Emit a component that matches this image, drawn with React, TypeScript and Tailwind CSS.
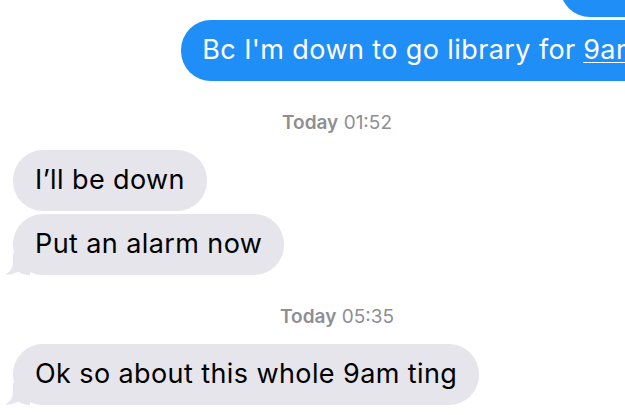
function Tail() {
  return (
    <svg
      className="absolute left-[-9px] bottom-0"
      width="26"
      height="22"
      viewBox="0 0 26 22"
    >
      <path
        d="M9 0 L9 9 C9 15 6 19 1 21.5 C6 22 10.5 20.8 14 18.5 C17.5 20.8 21 22 26 22 L26 0 Z"
        fill="#e6e5eb"
      />
    </svg>
  );
}

function Received({ text, tail }: { text: string; tail?: boolean }) {
  return (
    <div className="flex pl-[13px]">
      <div className="relative flex items-center h-[61px] px-[22px] rounded-[30px] bg-[#e6e5eb] text-black text-[27px] tracking-[0.015em] whitespace-nowrap">
        {tail && <Tail />}
        <span className="relative">{text}</span>
      </div>
    </div>
  );
}

function Stamp({ time }: { time: string }) {
  return (
    <div className="h-[69px] pt-[30px] text-center text-[19px] leading-[23px] text-[#8e8e93]">
      <span className="font-semibold">Today</span> {time}
    </div>
  );
}

export default function App() {
  return (
    <div className="w-[625px] h-[415px] overflow-hidden bg-white font-['Inter',sans-serif]">
      <div className="w-[674px] flex flex-col">
        <div className="flex justify-end pr-[13px] mt-[-44px] mb-[3px]">
          <div className="w-[101px] h-[61px] rounded-[30px] bg-[#1f8ef6]" />
        </div>
        <div className="flex justify-end pr-[13px]">
          <div className="flex items-center h-[61px] px-[21px] rounded-[30px] bg-[#1f8ef6] text-white text-[27px] tracking-[0.015em] whitespace-nowrap">
            Bc I'm down to go library for{" "}
            <span className="ml-[0.28em] underline decoration-1 underline-offset-[3px]">9am</span>
          </div>
        </div>
        <Stamp time="01:52" />
        <div className="flex flex-col gap-[3px]">
          <Received text="I’ll be down" />
          <Received text="Put an alarm now" tail />
        </div>
        <Stamp time="05:35" />
        <Received text="Ok so about this whole 9am ting" tail />
      </div>
    </div>
  );
}
